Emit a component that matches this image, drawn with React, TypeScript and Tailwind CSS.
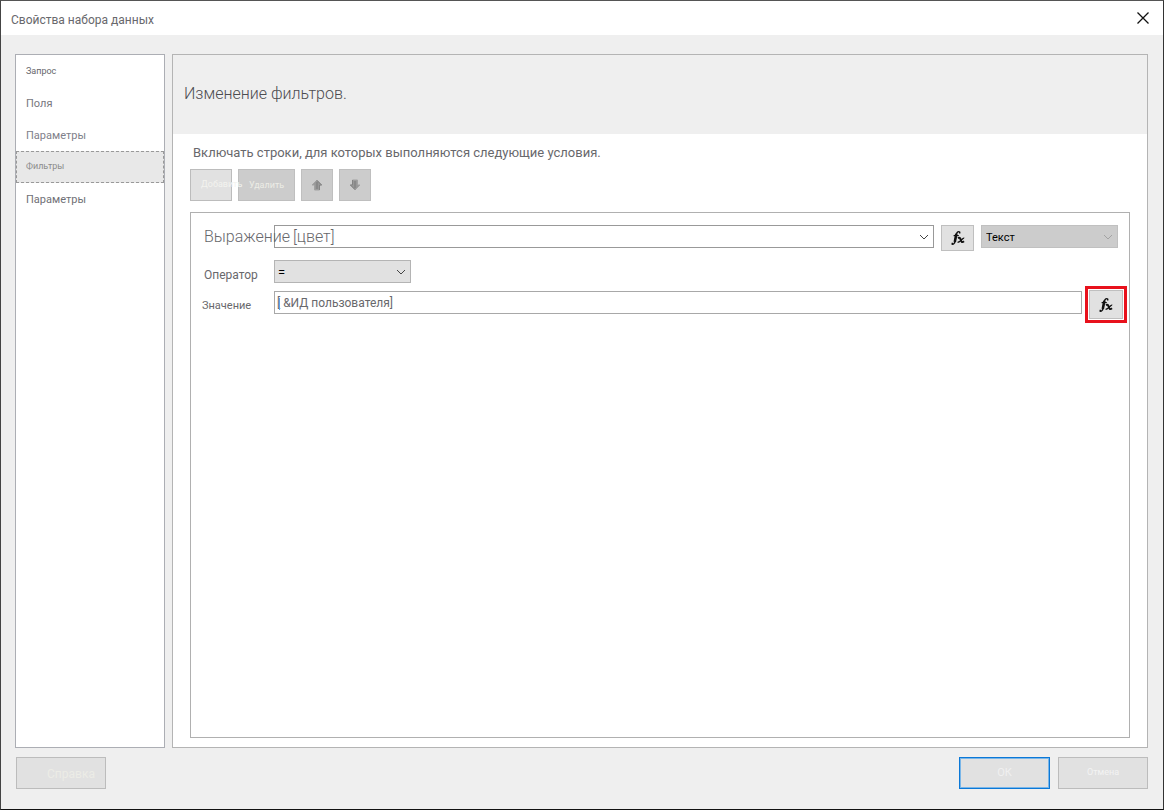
import React from 'react';

const TABS = [
    { id: 'query', label: 'Запрос', style: 'text-[9px] text-[#66666b]' },
    { id: 'fields', label: 'Поля', style: 'text-[11px] text-[#77777e]' },
    { id: 'options', label: 'Параметры', style: 'text-[11px] text-[#80808a]' },
    { id: 'filters', label: 'Фильтры', style: 'text-[9px] text-[#8c8c8c]' },
    { id: 'parameters', label: 'Параметры', style: 'text-[11px] text-[#707076]' }
];

function Chevron({ className }: { className: string }) {
    return (
        <svg className={`pointer-events-none absolute right-[5px] top-[9px] h-[6px] w-[10px] ${className}`} viewBox="0 0 10 6" fill="none" stroke="currentColor">
            <path d="M1 1l4 4 4-4" />
        </svg>
    );
}

function FxIcon() {
    return (
        <svg className="h-[16px] w-[16px]" viewBox="0 0 16 16" fill="none" stroke="#111">
            <path d="M9.8 2.4C8.6 1 7 1.6 6.4 4.4L5 11.4C4.6 13.6 3.2 14.8 1.8 13.8" strokeWidth="1.4" />
            <path d="M6.3 3.8L4.8 12" strokeWidth="2.5" />
            <path d="M9 2.6h1.4M1.6 13.6h1.4" strokeWidth="1.7" />
            <path d="M3.6 5.6H8.8" strokeWidth="1.2" />
            <path d="M8 8.3C9.8 7 10.2 8.2 10.7 9.8C11.4 12.2 12.2 12.8 14 11.3" strokeWidth="2" />
            <path d="M14.2 8.2C12.6 7.2 10.4 12.8 7.6 12.2" strokeWidth="1.3" />
        </svg>
    );
}

function ArrowIcon({ down }: { down?: boolean }) {
    return (
        <svg className={down ? 'h-[12px] w-[12px] rotate-180' : 'h-[12px] w-[12px]'} viewBox="0 0 12 12">
            <path d="M6 1L11 6H8.5V11H3.5V6H1Z" fill="#999" stroke="#a2a2a2" strokeLinejoin="round" />
            <path d="M6 1.5L10.5 6H8.5V11" fill="none" stroke="#848484" />
            <path d="M6 3V10" stroke="#8a8a8a" strokeWidth="2" />
        </svg>
    );
}

export default function App() {
    return (
        <div className="flex min-h-screen flex-col border border-t-[#555] border-l-[#444] border-r-[#333] border-b-[#111] bg-[#efefef] font-['Roboto','Liberation_Sans',sans-serif] text-[#68686c]">
            <header className="flex h-[34px] items-center justify-between bg-white pl-[10px] pr-[14px]">
                <h1 className="pt-[4px] text-[12px]">Свойства набора данных</h1>
                <button type="button" aria-label="Закрыть">
                    <svg className="h-[12px] w-[12px]" viewBox="0 0 12 12" stroke="#111" strokeWidth="1.3">
                        <path d="M0.5 0.5l11 11M11.5 0.5l-11 11" />
                    </svg>
                </button>
            </header>

            <div className="flex flex-1 gap-[7px] pl-[14px] pr-[15px] pt-[19px]">
                <nav className="flex w-[150px] shrink-0 flex-col border border-[#acaeb4] bg-white">
                    {TABS.map((tab) => (
                        <button
                            key={tab.id}
                            type="button"
                            className={`h-[32px] border pl-[9px] text-left ${tab.style} ${tab.id === 'filters' ? 'border-dashed border-[#999] bg-[#e8e8e8]' : 'border-transparent pt-[2px]'}`}
                        >
                            {tab.label}
                        </button>
                    ))}
                </nav>

                <main className="flex min-w-0 flex-1 flex-col border border-[#b4b4b4] bg-white">
                    <div className="flex h-[79px] items-center bg-[#efefef] pb-[2px] pl-[11px]">
                        <h2 className="text-[16px] font-light text-[#4c4c50]">Изменение фильтров.</h2>
                    </div>
                    <div className="flex flex-1 flex-col px-[17px] pb-[9px] pt-[9px]">
                        <p className="pl-[3px] text-[13px] leading-[20px]">Включать строки, для которых выполняются следующие условия.</p>

                        <div className="mt-[6px] flex gap-[6px]">
                            <button type="button" className="relative z-10 h-[32px] w-[42px] whitespace-nowrap border border-[#bcbcbc] bg-[#e1e1e1] pl-[10px] text-left text-[9px] text-[#f3f3ef]">Добавить</button>
                            <button type="button" className="h-[32px] w-[57px] border border-[#bfbfbf] bg-[#cccccc] pt-[2px] text-[9px] text-[#ecece6]">Удалить</button>
                            <button type="button" aria-label="Вверх" className="flex h-[32px] w-[32px] items-center justify-center border border-[#bfbfbf] bg-[#cccccc]">
                                <ArrowIcon />
                            </button>
                            <button type="button" aria-label="Вниз" className="flex h-[32px] w-[32px] items-center justify-center border border-[#bfbfbf] bg-[#cccccc]">
                                <ArrowIcon down />
                            </button>
                        </div>

                        <section className="mt-[11px] flex-1 border border-[#b0b0b0] pl-[13px] pt-[12px]">
                            <div className="flex items-start pr-[11px]">
                                <label htmlFor="expression" className="pointer-events-none relative z-10 w-[70px] shrink-0 whitespace-nowrap text-[16px] font-light leading-[23px]">Выражение</label>
                                <div className="relative min-w-0 flex-1">
                                    <select id="expression" className="block h-[23px] w-full appearance-none border border-[#999] bg-white pl-[18px] text-[16px] font-light leading-[20px]">
                                        <option>[цвет]</option>
                                    </select>
                                    <Chevron className="text-[#444]" />
                                </div>
                                <button type="button" aria-label="Выражение" className="ml-[7px] flex h-[26px] w-[33px] items-center justify-center border border-[#bfbfbf] bg-[#e1e1e1]">
                                    <FxIcon />
                                </button>
                                <div className="relative ml-[7px] w-[137px] shrink-0">
                                    <select aria-label="Тип" className="block h-[23px] w-full appearance-none border border-[#c0c0c0] bg-[#cccccc] pl-[4px] pt-[3px] text-[11px] text-black">
                                        <option>Текст</option>
                                    </select>
                                    <Chevron className="text-[#a3a3a3]" />
                                </div>
                            </div>

                            <div className="mt-[9px] flex items-start">
                                <label htmlFor="operator" className="w-[70px] shrink-0 pt-[7px] text-[12px] leading-[16px]">Оператор</label>
                                <div className="relative w-[137px]">
                                    <select id="operator" className="block h-[23px] w-full appearance-none border border-[#b4b4b4] bg-[#e1e1e1] pl-[3px] pt-[2px] text-[13px] text-black">
                                        <option>=</option>
                                    </select>
                                    <Chevron className="text-[#444]" />
                                </div>
                            </div>

                            <div className="mt-[3px] flex items-start pr-[2px]">
                                <label htmlFor="value" className="-ml-[2px] w-[72px] shrink-0 pt-[12px] text-[11px] leading-[16px]">Значение</label>
                                <div className="relative mt-[5px] min-w-0 flex-1">
                                    <input id="value" type="text" defaultValue="[ &amp;ИД пользователя]" className="block h-[23px] w-full border border-[#a8a8a8] bg-white pl-[2px] text-[12px]" />
                                    <span className="pointer-events-none absolute left-[5px] top-[7px] h-[12px] w-px bg-[#5aa5e8]" />
                                </div>
                                <span className="ml-[3px] border-3 border-[#e8111c] p-px">
                                    <button type="button" aria-label="Выражение для значения" className="flex h-[29px] w-[34px] items-center justify-center border border-[#bfbfbf] bg-[#e1e1e1]">
                                        <FxIcon />
                                    </button>
                                </span>
                            </div>
                        </section>
                    </div>
                </main>
            </div>

            <footer className="flex gap-[8px] px-[15px] pb-[20px] pt-[9px]">
                <button type="button" className="h-[32px] w-[90px] border border-[#bcbcbc] bg-[#e1e1e1] pl-[20px] pt-[2px] text-[12px] text-[#ecece6]">Справка</button>
                <button type="button" className="ml-auto h-[32px] w-[91px] border border-[#0b78d7] bg-[#e1e1e1] text-[11px] text-[#f0f0f0] ring-1 ring-inset ring-[#7ab6e8]">ОК</button>
                <button type="button" className="h-[32px] w-[90px] border border-[#bcbcbc] bg-[#e1e1e1] text-[9px] text-[#f3f3f3]">Отмена</button>
            </footer>
        </div>
    );
}
